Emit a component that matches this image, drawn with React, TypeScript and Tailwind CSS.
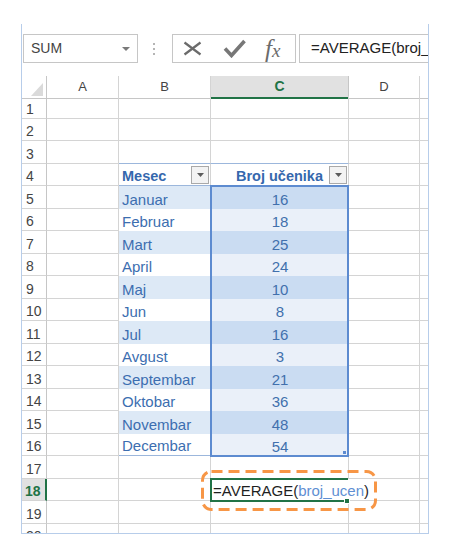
import React from "react";

const months = [
  "Januar",
  "Februar",
  "Mart",
  "April",
  "Maj",
  "Jun",
  "Jul",
  "Avgust",
  "Septembar",
  "Oktobar",
  "Novembar",
  "Decembar",
];
const counts = [16, 18, 25, 24, 10, 8, 16, 3, 21, 36, 48, 54];

const rows = Array.from({ length: 20 }, (_, i) => i + 1);

function FilterBtn() {
  return (
    <span className="flex h-[18px] w-[18px] shrink-0 items-center justify-center border border-[#a9a9a9] bg-[#f3f3f3]">
      <svg width="7" height="4" viewBox="0 0 7 4">
        <path d="M0 0h7L3.5 4z" fill="#5c5c5c" />
      </svg>
    </span>
  );
}

function RowHead({ r }: { r: number }) {
  const active = r === 18;
  return (
    <div
      className={
        active
          ? "flex items-end border-b border-r-2 border-b-[#d4d4d4] border-r-[#217346] bg-[#e1e1e1] pb-[2px] pl-[3px] text-[14px] font-bold leading-none text-[#217346]"
          : "flex items-end border-b border-r border-b-[#d4d4d4] border-r-[#c6c6c6] pb-[2px] pl-[4px] text-[14px] leading-none text-[#444]"
      }
    >
      {r}
    </div>
  );
}

function ColB({ r }: { r: number }) {
  if (r === 3)
    return <div className="border-b border-r border-b-[#9cb7dc] border-r-[#d4d4d4]" />;
  if (r === 4)
    return (
      <div className="flex items-end justify-between border-b border-r border-b-[#9cb7dc] border-r-[#d4d4d4] pb-[1px] pl-[3px] pr-[1px]">
        <span className="mb-[1px] text-[14.5px] font-bold leading-none text-[#3568ad]">Mesec</span>
        <FilterBtn />
      </div>
    );
  if (r >= 5 && r <= 16) {
    const band = r % 2 === 1;
    const last = r === 16;
    return (
      <div
        className={
          (band ? "bg-[#dde9f6] " : "bg-white ") +
          (last ? "border-b border-b-[#9cb7dc] " : "") +
          "flex items-end border-r border-r-[#d4d4d4] pb-[2px] pl-[3px] text-[15px] leading-none text-[#3c6eb0]"
        }
      >
        {months[r - 5]}
      </div>
    );
  }
  return <div className="border-b border-r border-[#d4d4d4]" />;
}

function ColC({ r }: { r: number }) {
  if (r === 3)
    return <div className="border-b border-r border-b-[#9cb7dc] border-r-[#d4d4d4]" />;
  if (r === 4)
    return (
      <div className="flex items-end justify-end border-b border-r border-b-[#9cb7dc] border-r-[#d4d4d4] pb-[1px] pr-[1px]">
        <span className="mb-[1px] mr-[6px] text-[14.5px] font-bold leading-none text-[#3568ad]">
          Broj učenika
        </span>
        <FilterBtn />
      </div>
    );
  if (r >= 5 && r <= 16) {
    const band = r % 2 === 1;
    return (
      <div
        className={
          (band ? "bg-[#cadcf2] " : "bg-[#eaf0f9] ") +
          "flex items-end justify-center pb-[2px] text-[15px] leading-none text-[#4170ad]"
        }
      >
        {counts[r - 5]}
      </div>
    );
  }
  if (r === 18)
    return (
      <div className="flex items-end whitespace-nowrap border-b border-b-[#d4d4d4] pb-[2px] pl-[2px] text-[15px] leading-none text-[#1f1f1f]">
        <span>=AVERAGE(</span>
        <span className="text-[#5f8fd3]">broj_ucen</span>
        <span>)</span>
        <span className="mb-[-2px] ml-[2px] h-[17px] w-[1px] bg-black" />
      </div>
    );
  return <div className="border-b border-r border-[#d4d4d4]" />;
}

export default function App() {
  return (
    <div className="h-[550px] w-[456px] bg-white pt-[24px] font-['Liberation_Sans',Arial,sans-serif]">
      <div className="ml-[21px] h-[510px] w-[408px] overflow-hidden border-x border-b border-[#b7cdea]">
        {/* Formula bar */}
        <div className="flex h-[52px] items-start pl-[1px] pt-[10px]">
          <div className="flex h-[29px] w-[115px] shrink-0 items-center border border-[#c6c6c6] pl-[7px] pr-[7px] text-[14px] text-[#444]">
            <span>SUM</span>
            <svg className="ml-auto" width="8" height="4" viewBox="0 0 8 4">
              <path d="M0 0h8L4 4z" fill="#7a7a7a" />
            </svg>
          </div>
          <div className="ml-[15px] flex h-[29px] w-[2px] shrink-0 flex-col items-center justify-center gap-[3px]">
            <span className="h-[2px] w-[2px] bg-[#b5b5b5]" />
            <span className="h-[2px] w-[2px] bg-[#b5b5b5]" />
            <span className="h-[2px] w-[2px] bg-[#b5b5b5]" />
          </div>
          <div className="ml-[17px] flex h-[29px] w-[124px] shrink-0 items-center border border-[#c6c6c6] pl-[10px]">
            <svg width="19" height="15" viewBox="0 0 19 15">
              <path d="M1.5 1.5L17.5 13.5M17.5 1.5L1.5 13.5" stroke="#6b6b6b" strokeWidth="2.2" />
            </svg>
            <svg className="ml-[21px]" width="23" height="19" viewBox="0 0 23 19">
              <path d="M2 9.5L8.5 16.5L21.5 2" stroke="#777" strokeWidth="3.6" fill="none" />
            </svg>
            <span className="ml-[19px] font-['Liberation_Serif',serif] text-[25px] italic leading-none text-[#6b6b6b]">
              f<span className="text-[19px]">x</span>
            </span>
          </div>
          <div className="ml-[3px] flex h-[29px] min-w-0 flex-1 items-center overflow-hidden whitespace-nowrap border-y border-l border-[#c6c6c6] pl-[11px] text-[15px] text-[#222]">
            =AVERAGE(broj_
          </div>
        </div>

        {/* Column headers */}
        <div className="grid h-[20px] grid-cols-[25px_72px_92px_138px_71px_8px] text-[13px] text-[#444]">
          <div className="flex items-end justify-end border-b border-r border-b-[#c6c6c6] border-r-[#c6c6c6] pb-[2px] pr-[3px]">
            <svg width="12" height="13" viewBox="0 0 12 13">
              <path d="M12 0V13H0z" fill="#dadada" />
            </svg>
          </div>
          <div className="flex items-center justify-center border-b border-r border-b-[#c6c6c6] border-r-[#d4d4d4]">A</div>
          <div className="flex items-center justify-center border-b border-r border-b-[#c6c6c6] border-r-[#d4d4d4]">B</div>
          <div className="flex items-center justify-center border-b-2 border-r border-b-[#217346] border-r-[#c6c6c6] bg-[#e1e1e1] text-[14px] font-bold text-[#217346]">
            C
          </div>
          <div className="flex items-center justify-center border-b border-r border-b-[#c6c6c6] border-r-[#d4d4d4]">D</div>
          <div className="border-b border-b-[#c6c6c6]" />
        </div>

        {/* Cells */}
        <div className="relative grid grid-cols-[25px_72px_92px_138px_71px_8px] auto-rows-[22.5px]">
          {rows.map((r) => (
            <React.Fragment key={r}>
              <RowHead r={r} />
              <div className="border-b border-r border-[#d4d4d4]" />
              <ColB r={r} />
              <ColC r={r} />
              <div className="border-b border-r border-[#d4d4d4]" />
              <div className="border-b border-[#d4d4d4]" />
            </React.Fragment>
          ))}

          {/* referenced range C5:C16 */}
          <div className="absolute left-[188px] top-[89px] h-[272px] w-[139px] border-2 border-[#5d8bd0]">
            <span className="absolute bottom-[1px] right-[1px] h-[3px] w-[3px] bg-[#5d8bd0]" />
          </div>

          {/* active edit cell C18 */}
          <div className="absolute left-[188px] top-[382px] h-[24px] w-[138px] border-y-2 border-l-2 border-[#217346]" />
          <span className="absolute left-[322px] top-[402px] h-[6px] w-[6px] border border-white bg-[#217346]" />

          {/* callout */}
          <svg className="absolute left-[179px] top-[374px]" width="176" height="41" viewBox="0 0 176 41">
            <rect
              x="1.5"
              y="1.5"
              width="173"
              height="38"
              rx="9"
              fill="none"
              stroke="#f79646"
              strokeWidth="3"
              strokeDasharray="11 6"
            />
          </svg>
        </div>
      </div>
    </div>
  );
}
